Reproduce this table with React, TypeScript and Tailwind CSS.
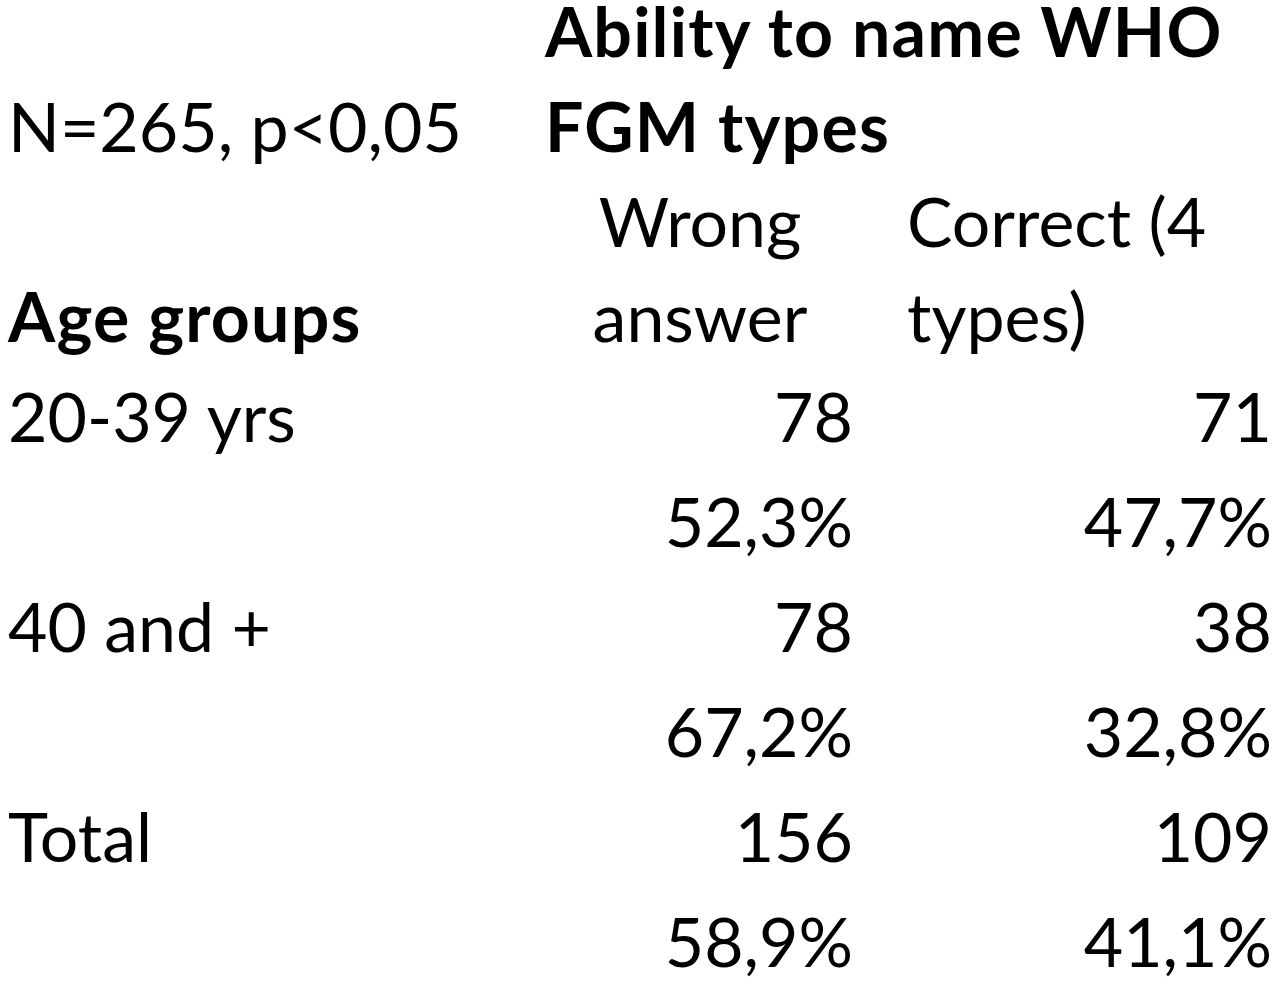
import React from "react";

const rows: [string, string, string][] = [
  ["20-39 yrs", "78", "71"],
  ["", "52,3%", "47,7%"],
  ["40 and +", "78", "38"],
  ["", "67,2%", "32,8%"],
  ["Total", "156", "109"],
  ["", "58,9%", "41,1%"],
];

export default function App() {
  return (
    <div
      className="w-[1280px] h-[987px] overflow-hidden bg-white text-black"
      style={{ fontFamily: "Lato, 'Noto Sans', sans-serif" }}
    >
      <div className="grid grid-cols-[545px_310px_425px] text-[68px]">
        {/* header row 1 */}
        <div className="pl-[8px] h-[173px] flex items-end leading-[95px] whitespace-nowrap">
          N=265, p&lt;0,05
        </div>
        <div className="col-span-2 h-[173px] font-bold tracking-[1.2px]">
          <div className="h-[78px] leading-[61px] whitespace-nowrap">Ability to name WHO</div>
          <div className="leading-[95px] whitespace-nowrap">FGM types</div>
        </div>
        {/* header row 2 */}
        <div className="pl-[8px] h-[190px] flex items-end leading-[95px] font-bold tracking-[1.2px] whitespace-nowrap">
          Age groups
        </div>
        <div className="h-[190px] leading-[95px] text-center">
          <div>Wrong</div>
          <div>answer</div>
        </div>
        <div className="h-[190px] leading-[95px] pl-[52px]">
          <div>Correct (4</div>
          <div>types)</div>
        </div>
        {rows.map((r, i) => (
          <React.Fragment key={i}>
            <div className="pl-[8px] leading-[105px] h-[105px] whitespace-nowrap">{r[0]}</div>
            <div className="pr-[2px] leading-[105px] h-[105px] text-right">{r[1]}</div>
            <div className="pr-[8px] leading-[105px] h-[105px] text-right">{r[2]}</div>
          </React.Fragment>
        ))}
      </div>
    </div>
  );
}
